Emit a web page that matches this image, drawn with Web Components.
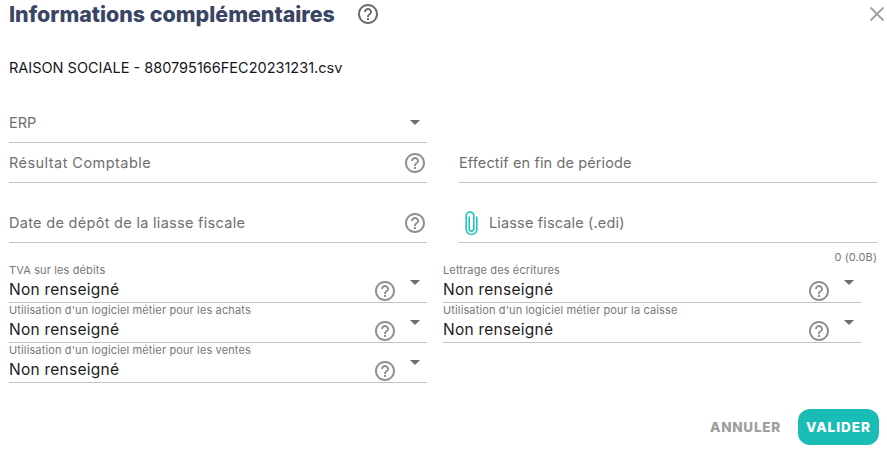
<!DOCTYPE html>
<html lang="fr">
<head>
<meta charset="utf-8">
<title>Informations complémentaires</title>
<style>
  html, body { margin: 0; padding: 0; background: #fff; }
  body { font-family: Inter, "Liberation Sans", sans-serif; width: 887px; height: 452px; overflow: hidden; }
</style>
</head>
<body>
<info-dialog></info-dialog>
<script>
const HELP_SVG = `<svg viewBox="0 0 24 24" width="24" height="24" fill="#8f8f8f"><path d="M11 18h2v-2h-2v2zm1-16C6.48 2 2 6.48 2 12s4.48 10 10 10 10-4.48 10-10S17.52 2 12 2zm0 18c-4.41 0-8-3.59-8-8s3.59-8 8-8 8 3.59 8 8-3.59 8-8 8zm0-14c-2.21 0-4 1.79-4 4h2c0-1.1.9-2 2-2s2 .9 2 2c0 2-3 1.75-3 5h2c0-2.25 3-2.5 3-5 0-2.21-1.79-4-4-4z"/></svg>`;

class HelpIcon extends HTMLElement {
  connectedCallback() {
    this.attachShadow({ mode: "open" });
    this.shadowRoot.innerHTML = `
      <style>
        :host { display: inline-flex; width: 24px; height: 24px; flex: none; }
        svg { display: block; }
        :host([dark]) svg { fill: #6b6b6b; }
      </style>${HELP_SVG}`;
  }
}

class TextField extends HTMLElement {
  connectedCallback() {
    this.attachShadow({ mode: "open" });
    const h = this.getAttribute("height") || 40;
    this.shadowRoot.innerHTML = `
      <style>
        :host {
          display: flex;
          align-items: center;
          box-sizing: border-box;
          height: ${h}px;
          padding-top: ${this.getAttribute("pad") || 0}px;
          border-bottom: 1px solid #c2c2c2;
          color: #6f6f6f;
          font-size: 14.5px;
        }
        .label { flex: 1; }
        .end { display: flex; }
        .arrow { width: 0; height: 0; margin-right: 7px; border: 5px solid transparent; border-top-color: #6f6f73; border-bottom: 0; }
      </style>
      <slot name="start"></slot>
      <span class="label"><slot></slot></span>
      <span class="end"><slot name="end"></slot></span>
      ${this.hasAttribute("arrow") ? '<span class="arrow"></span>' : ""}`;
  }
}

class SelectField extends HTMLElement {
  connectedCallback() {
    this.attachShadow({ mode: "open" });
    this.shadowRoot.innerHTML = `
      <style>
        :host {
          display: block;
          box-sizing: border-box;
          height: 40px;
          border-bottom: 1px solid #c2c2c2;
        }
        .label { height: 15px; font-size: 11px; letter-spacing: .13px; line-height: 15px; color: #777; }
        .row { display: flex; align-items: flex-start; height: 24px; }
        .value { flex: 1; font-size: 15.5px; letter-spacing: .25px; line-height: 24px; color: #1b1b22; }
        help-icon { margin-top: 1px; }
        .arrow { width: 0; height: 0; margin: 2px 7px 0 13px; border: 5px solid transparent; border-top-color: #6f6f73; border-bottom: 0; }
      </style>
      <div class="label">${this.getAttribute("label")}</div>
      <div class="row">
        <span class="value">Non renseigné</span>
        <help-icon></help-icon>
        <span class="arrow"></span>
      </div>`;
  }
}

class InfoDialog extends HTMLElement {
  connectedCallback() {
    this.attachShadow({ mode: "open" });
    this.shadowRoot.innerHTML = `
      <style>
        :host { display: block; box-sizing: border-box; width: 887px; height: 452px; padding: 0 10px 0 9px; }
        header { display: flex; align-items: center; height: 27px; }
        h1 { margin: 0; font-size: 21.4px; font-weight: 800; color: #3a4566; }
        header help-icon { margin-left: 21px; }
        .close { margin-left: auto; margin-right: -12px; display: flex; }
        .file { margin-top: 31px; height: 20px; line-height: 20px; font-size: 14.5px; color: #16161d; }
        .fields { margin-top: 25px; display: grid; grid-template-columns: 418px 418px; column-gap: 32px; }
        .size { height: 27px; padding-top: 7px; box-sizing: border-box; text-align: right; font-size: 11px; letter-spacing: .1px; color: #777; grid-column: 2; line-height: 15px; }
        .selects { display: grid; grid-template-columns: 418px 418px; column-gap: 16px; margin-top: -7px; }
        footer { display: flex; justify-content: flex-end; align-items: center; gap: 17px; margin: 26px -2px 0 0; }
        .cancel, .ok { font-size: 13.5px; font-weight: 800; letter-spacing: .75px; }
        .cancel { color: #9e9e9e; }
        .ok { background: #1abdb5; color: #fff; border-radius: 12px; width: 81px; height: 36px; display: flex; align-items: center; justify-content: center; letter-spacing: 1px; }
        .clip { margin: 0 8px 0 0; display: flex; }
      </style>
      <header>
        <h1>Informations complémentaires</h1>
        <help-icon dark></help-icon>
        <span class="close">
          <svg width="24" height="24" viewBox="0 0 24 24"><path d="M5.5 5.5l13 13M18.5 5.5l-13 13" stroke="#a0a0a0" stroke-width="1.8" fill="none"/></svg>
        </span>
      </header>
      <div class="file">RAISON SOCIALE - 880795166FEC20231231.csv</div>
      <div class="fields">
        <text-field arrow height="40" style="grid-column:1">ERP</text-field>
        <span></span>
        <text-field style="letter-spacing:.45px">Résultat Comptable<help-icon slot="end"></help-icon></text-field>
        <text-field style="letter-spacing:.12px">Effectif en fin de période</text-field>
        <text-field height="60" pad="20" style="letter-spacing:.3px">Date de dépôt de la liasse fiscale<help-icon slot="end"></help-icon></text-field>
        <text-field height="60" pad="20" style="letter-spacing:.15px">
          <span slot="start" class="clip">
            <svg width="22" height="26" viewBox="-2 0 22 26" fill="none" stroke="#1fc4bd" stroke-width="1.6" stroke-linecap="round"><path d="M8.2 7v11.8a2.3 2.3 0 0 0 4.6 0V5.8a3.8 3.8 0 0 0-7.6 0v13.4a5.3 5.3 0 0 0 10.6 0V7"/></svg>
          </span>
          Liasse fiscale (.edi)
        </text-field>
        <span></span>
        <div class="size">0 (0.0B)</div>
      </div>
      <div class="selects">
        <select-field label="TVA sur les débits"></select-field>
        <select-field label="Lettrage des écritures"></select-field>
        <select-field label="Utilisation d'un logiciel métier pour les achats"></select-field>
        <select-field label="Utilisation d'un logiciel métier pour la caisse"></select-field>
        <select-field label="Utilisation d'un logiciel métier pour les ventes"></select-field>
      </div>
      <footer>
        <span class="cancel">ANNULER</span>
        <span class="ok">VALIDER</span>
      </footer>`;
  }
}

customElements.define("help-icon", HelpIcon);
customElements.define("text-field", TextField);
customElements.define("select-field", SelectField);
customElements.define("info-dialog", InfoDialog);
</script>
</body>
</html>
